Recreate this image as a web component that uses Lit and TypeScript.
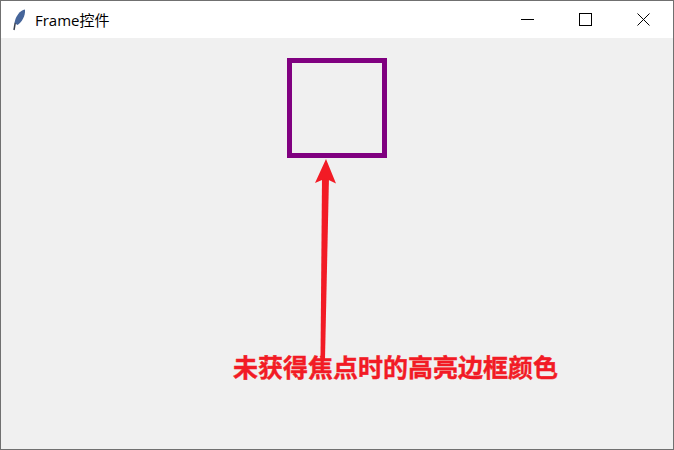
import { LitElement, html, css, svg } from "lit";
import { customElement } from "lit/decorators.js";

@customElement("app-root")
export class AppRoot extends LitElement {
  static styles = css`
    :host { display: block; width: 674px; height: 450px; }
    .window {
      position: relative; box-sizing: border-box; width: 674px; height: 450px;
      border: 1px solid #707070; background: #f0f0f0;
      display: flex; flex-direction: column; overflow: hidden;
      font-family: "Noto Sans CJK SC", sans-serif;
    }
    .titlebar { height: 37px; background: #fff; display: flex; align-items: center; flex: none; }
    .feather { width: 18px; height: 24px; margin-left: 9px; flex: none; }
    .title {
      margin-left: 7px; font: 15px/20px "Open Sans", "Noto Sans CJK SC", sans-serif;
      color: #000; flex: 1;
    }
    .controls { display: flex; height: 100%; padding-right: 1px; }
    .control { width: 58px; height: 37px; display: flex; align-items: center; justify-content: center; }
    .control svg { width: 13px; height: 13px; display: block; }
    .content { flex: 1; display: flex; flex-direction: column; align-items: center; padding-top: 20px; }
    .frame { box-sizing: border-box; width: 100px; height: 100px; border: 5px solid #800080; }
    .arrow { position: absolute; left: 0; top: 0; width: 672px; height: 448px; pointer-events: none; }
    .note {
      position: absolute; left: 232px; top: 347px; white-space: nowrap;
      font: 700 25px/36px "Noto Sans CJK SC", sans-serif; color: #f21b25;
      -webkit-text-stroke: 0.4px #f21b25;
    }
  `;

  render() {
    return html`
      <div class="window">
        <div class="titlebar">
          <svg class="feather" viewBox="0 0 18 24">
            <path d="M15 1.500 C10 2.500 5.500 8 4.500 15 L7.500 17 C12 14 15.500 8 15 1.500 Z" fill="#46659a"></path>
            <path d="M5.200 15 L4 22" stroke="#3a4150" stroke-width="1.500" fill="none"></path>
          </svg>
          <div class="title">Frame控件</div>
          <div class="controls">
            <div class="control"><svg viewBox="0 0 13 13"><path d="M0 6.500H13" stroke="#000" stroke-width="1"></path></svg></div>
            <div class="control"><svg viewBox="0 0 13 13"><rect x=".5" y=".5" width="12" height="12" fill="none" stroke="#000"></rect></svg></div>
            <div class="control"><svg viewBox="0 0 13 13"><path d="M.5 .5L12.500 12.500M12.500 .5L.5 12.500" stroke="#000" stroke-width="1" fill="none"></path></svg></div>
          </div>
        </div>
        <div class="content"><div class="frame"></div></div>
        <svg class="arrow" viewBox="0 0 672 448">
          ${svg`<path d="M321 176 L328 176 L324 358 L319.500 358 Z" fill="#f21b25"></path>
          <path d="M325 158 L335 182.500 L324.500 177.500 L314 182 Z" fill="#f21b25"></path>`}
        </svg>
        <div class="note">未获得焦点时的高亮边框颜色</div>
      </div>
    `;
  }
}
